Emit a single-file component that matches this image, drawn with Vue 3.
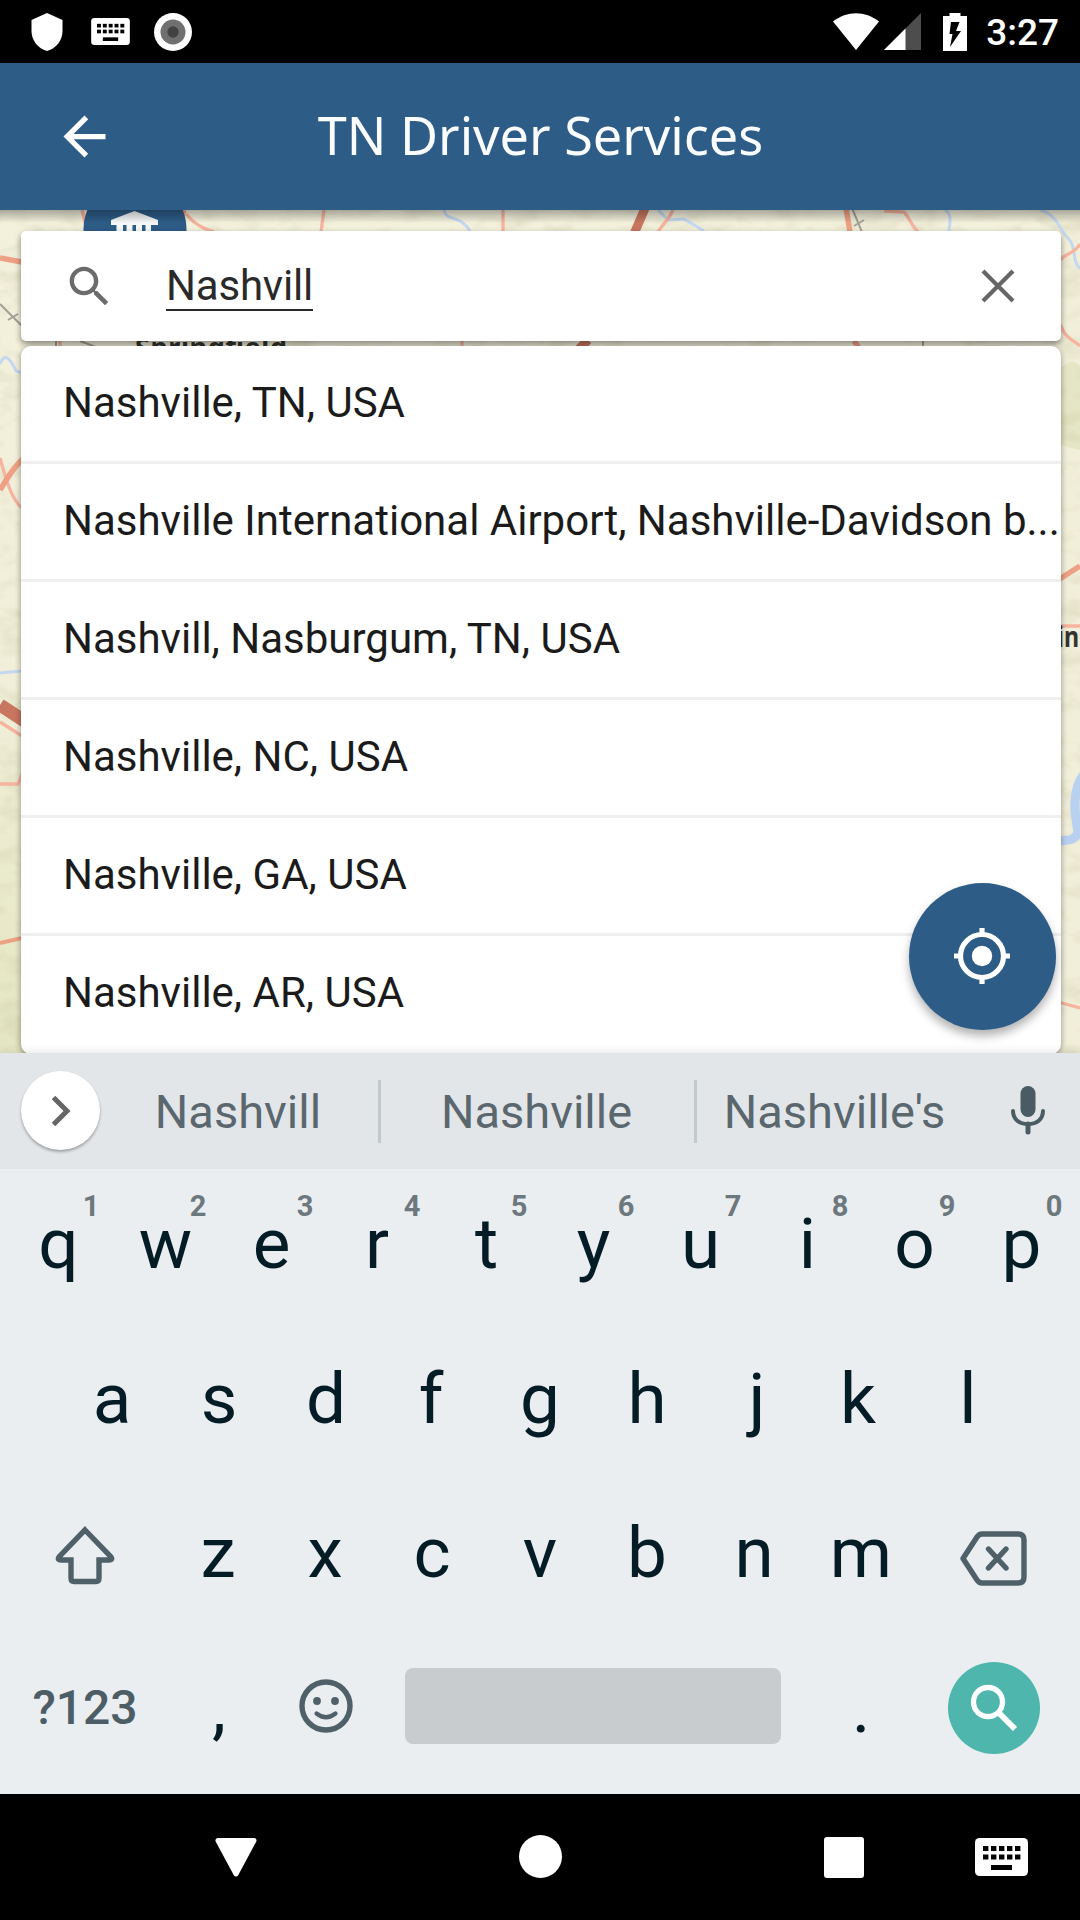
<script setup>
const places = [
  'Nashville, TN, USA',
  'Nashville International Airport, Nashville-Davidson b...',
  'Nashvill, Nasburgum, TN, USA',
  'Nashville, NC, USA',
  'Nashville, GA, USA',
  'Nashville, AR, USA',
]
// optical centring of the asymmetric glyphs, in pixels
const nudge = { r: -2.5, f: -2, j: 3, k: -3, z: -1, x: -1, c: -1, e: -1 }
const shiftOf = (k) => ({ transform: `translateX(${nudge[k] || 0}px)` })
const topRow = 'qwertyuiop'.split('').map((k, i) => ({ k, n: (i + 1) % 10 }))
const midRow = 'asdfghjkl'.split('')
const lowRow = 'zxcvbnm'.split('')
const dots = [0, 1, 2, 3, 4]
</script>

<template>
  <div class="screen">
    <div class="status">
      <svg width="32" height="38" viewBox="0 0 32 38" class="shield"><path d="M16 0 31.500 7V18C31.500 27.500 25 35.500 16 38 7 35.500.5 27.500.5 18V7Z" fill="#fff" /></svg>
      <svg width="39" height="27" viewBox="0 0 53 37" class="kb-small">
        <rect width="53" height="37" rx="4.500" fill="#fff" />
        <g v-for="i in dots" :key="i"><rect :x="8 + i * 8" y="8" width="5.400" height="5" /><rect :x="8 + i * 8" y="16" width="5.400" height="5" /></g>
        <rect x="16" y="26.500" width="21" height="5" />
      </svg>
      <svg width="38" height="38" viewBox="0 0 38 38" class="disc"><circle cx="19" cy="19" r="19" fill="#fff" /><circle cx="19" cy="19" r="12.500" fill="#707070" /><circle cx="19" cy="19" r="5.700" fill="#424242" /></svg>
      <span class="grow"></span>
      <svg width="46" height="37" viewBox="0 0 46 37"><path d="M0 8.500C14-2.500 32-2.500 46 8.500L23 37Z" fill="#fff" /></svg>
      <svg width="37" height="37" viewBox="0 0 37 37" class="signal"><path d="M37 0V37H0Z" fill="#4d4d4d" /><path d="M21.500 15.500V37H0Z" fill="#fff" /></svg>
      <svg width="24" height="38" viewBox="0 0 24 38" class="battery"><path d="M6.500 0H17.500V3H24V38H0V3H6.500Z" fill="#fff" /><path d="M8 9H16.500L13 18H18L7 34 9.500 21H6.500Z" fill="#000" /></svg>
      <span class="clock">3:27</span>
    </div>

    <header class="bar">
      <svg class="back" width="63" height="63" viewBox="0 0 24 24"><path fill="#fff" d="M20 11H7.830l5.590-5.590L12 4l-8 8 8 8 1.410-1.410L7.830 13H20v-2z" /></svg>
      <h1>TN Driver Services</h1>
    </header>

    <main class="map">
      <svg class="terrain" width="1080" height="843" viewBox="0 210 1080 843">
        <defs>
          <filter id="relief" x="0" y="0" width="100%" height="100%">
            <feTurbulence type="fractalNoise" baseFrequency="0.035 0.06" numOctaves="3" seed="8" />
            <feColorMatrix values="0 0 0 0 .5  0 0 0 0 .48  0 0 0 0 .3  1.500 0 0 0 -.68" />
          </filter>
          <linearGradient id="land" x1="0" y1="0" x2="0" y2="1"><stop offset="0" stop-color="#f3f0dc" /><stop offset=".55" stop-color="#f1efd9" /><stop offset="1" stop-color="#e4e6c2" /></linearGradient>
          <linearGradient id="cast" x1="0" y1="0" x2="0" y2="1"><stop offset="0" stop-color="#000" stop-opacity=".3" /><stop offset="1" stop-color="#000" stop-opacity="0" /></linearGradient>
        </defs>
        <rect y="210" width="1080" height="843" fill="url(#land)" />
        <rect x="1040" y="210" width="40" height="843" fill="#f1eed9" />
        <path d="M1040 370C1062 380 1066 352 1080 366V450L1040 440Z" fill="#dfe3bc" opacity=".7" />
        <rect y="210" width="1080" height="843" filter="url(#relief)" opacity=".38" />
        <g fill="none" stroke="#c3d7f0" stroke-width="3">
          <path d="M444 210C446 222 460 214 470 231M658 210 668 220 684 219 704 231M945 210C952 214 950 222 949 232M1041 210C1058 216 1058 228 1068 238 1078 248 1070 262 1082 270" />
          <path d="M0 364C5 350 12 362 16 371L22 373M0 673 22 671" />
        </g>
        <path d="M1086 772C1068 790 1077 825 1078 832 1076 842 1064 840 1056 841" fill="none" stroke="#b9d1f1" stroke-width="9" />
        <g fill="none" stroke="#f6b39d" stroke-width="3.300">
          <path d="M82 210 86 226M186 214C196 226 204 228 214 232M324 210 321 232M503 210V232M673 210C668 222 662 224 658 232M884 211 904 212C910 218 910 224 918 232M1060 260C1068 252 1074 254 1080 244M1060 324C1066 340 1074 340 1080 346" />
          <path d="M0 458C6 480 12 500 22 508M0 722 22 736M0 784H18L22 774M1058 626H1080M1058 1002 1080 1008M60 341V347M462 341V347" />
        </g>
        <g fill="none" stroke="#eda084" stroke-width="5.500">
          <path d="M0 258 22 262M0 490C6 480 14 466 24 458M1058 580 1080 566M846 208 850 232M184 210 180 220M854 341 862 352" />
          <path d="M0 943 22 938" stroke-width="4" />
        </g>
        <g fill="none" stroke="#c87660">
          <path d="M646 206 634 234M588 340 576 352" stroke-width="9" /><path d="M0 705 26 722" stroke-width="13" />
        </g>
        <path d="M0 304 24 328M8 320 18 314M852 208 862 232M854 226 864 220M923 341V347M56 341V347M80 341 96 347" fill="none" stroke="#a3a193" stroke-width="2" />
        <text x="135" y="357" textLength="152" class="label">Springfield</text>
        <text x="1057" y="647" textLength="22" lengthAdjust="spacingAndGlyphs" class="label big">in</text>
        <circle cx="135" cy="229.500" r="51.500" fill="#2d5c87" />
        <path d="M134.500 211 158 220V225H111V220ZM116.500 225H123V232H116.500ZM126.500 225H132.500V232H126.500ZM136 225H142V232H136ZM145.500 225H151V232H145.500Z" fill="#f4f6f8" />
        <rect y="210" width="1080" height="13" fill="url(#cast)" />
      </svg>

      <div class="search">
        <svg class="lens" width="53" height="53" viewBox="0 0 24 24"><path fill="#6b6b6b" d="M15.500 14h-.79l-.28-.27C15.410 12.590 16 11.110 16 9.500 16 5.910 13.090 3 9.500 3S3 5.910 3 9.500 5.910 16 9.500 16c1.610 0 3.090-.59 4.230-1.570l.27.28v.79l5 4.990L20.490 19l-4.990-5zm-6 0C7.010 14 5 11.990 5 9.500S7.010 5 9.500 5 14 7.010 14 9.500 11.990 14 9.500 14z" /></svg>
        <span class="query">Nashvill</span>
        <svg class="clear" width="34" height="34" viewBox="0 0 34 34"><path d="M2 2 32 32M32 2 2 32" stroke="#666" stroke-width="4.200" /></svg>
      </div>

      <ul class="results">
        <li v-for="p in places" :key="p">{{ p }}</li>
      </ul>

      <div class="fab">
        <svg width="58" height="58" viewBox="-29 -29 58 58"><circle r="21.500" fill="none" stroke="#fff" stroke-width="5.200" /><circle r="10.200" fill="#fff" /><path d="M0-28V-21M0 28V21M-28 0H-21M28 0H21" stroke="#fff" stroke-width="5.200" /></svg>
      </div>
    </main>

    <section class="suggest">
      <div class="expand"><svg width="20" height="32" viewBox="0 0 20 32"><path d="M2.500 2.500 16 16 2.500 29.500" fill="none" stroke="#666" stroke-width="5" /></svg></div>
      <span class="word first">Nashvill</span>
      <i></i>
      <span class="word mid">Nashville</span>
      <i></i>
      <span class="word last">Nashville's</span>
      <svg class="mic" width="36" height="50" viewBox="0 0 36 50"><rect x="10.500" y="0" width="15" height="31" rx="7.500" fill="#4b5b63" /><path d="M3 25C3 33.500 9.500 38 18 38S33 33.500 33 25" fill="none" stroke="#4b5b63" stroke-width="4" stroke-linecap="round" /><path d="M18 38V46" stroke="#4b5b63" stroke-width="5" stroke-linecap="round" /></svg>
    </section>

    <section class="keys">
      <div class="row">
        <div v-for="t in topRow" :key="t.k" class="key"><b :style="shiftOf(t.k)">{{ t.k }}</b><sup>{{ t.n }}</sup></div>
      </div>
      <div class="row">
        <div v-for="k in midRow" :key="k" class="key"><b :style="shiftOf(k)">{{ k }}</b></div>
      </div>
      <div class="row">
        <div class="wide"><svg class="shift" width="60" height="59" viewBox="0 0 60 59"><path d="M30 4 56 31Q58 34 54 34H44V52Q44 55.500 41 55.500H19Q16 55.500 16 52V34H6Q2 34 4 31Z" fill="none" stroke="#4f6069" stroke-width="5.400" /></svg></div>
        <div v-for="k in lowRow" :key="k" class="key"><b :style="shiftOf(k)">{{ k }}</b></div>
        <div class="wide"><svg class="del" width="67" height="55" viewBox="0 0 67 55"><path d="M3 27.500 17 6Q19 3 22 3H58Q64 3 64 9V46Q64 52 58 52H22Q19 52 17 49Z" fill="none" stroke="#4f6069" stroke-width="5.400" stroke-linejoin="round" /><path d="M28.500 18 46 37M46 18 28.500 37" stroke="#4f6069" stroke-width="5.400" stroke-linecap="round" /></svg></div>
      </div>
      <div class="row">
        <div class="wide sym">?123</div>
        <div class="key">,</div>
        <div class="key"><svg class="face" width="54" height="54" viewBox="-27 -27 54 54" fill="#4f6069"><circle r="24" fill="none" stroke="#4f6069" stroke-width="5.400" /><circle cx="-9" cy="-5" r="3.900" /><circle cx="9" cy="-5" r="3.900" /><path d="M-9.500 7.500Q0 15 9.500 7.500" fill="none" stroke="#4f6069" stroke-width="4.200" stroke-linecap="round" /></svg></div>
        <div class="space-cell"><div class="space"></div></div>
        <div class="key">.</div>
        <div class="wide"><div class="go"><svg width="48" height="48" viewBox="0 0 48 48" fill="none" stroke="#fff"><circle cx="18" cy="18" r="14.500" stroke-width="5.300" /><path d="M28.500 28.500 45 45" stroke-width="6" /></svg></div></div>
      </div>
    </section>

    <nav class="nav">
      <svg class="tri" width="42" height="39" viewBox="0 0 42 39"><path d="M3 2.500H39L21 36Z" fill="#fff" stroke="#fff" stroke-width="5" stroke-linejoin="round" /></svg>
      <div class="home"></div>
      <div class="recent"></div>
      <svg class="kb" width="53" height="38" viewBox="0 0 53 38">
        <rect width="53" height="38" rx="4.500" fill="#fff" />
        <g v-for="i in dots" :key="i"><rect :x="8 + i * 8" y="8" width="5.400" height="5" /><rect :x="8 + i * 8" y="16.500" width="5.400" height="5" /></g>
        <rect x="16" y="27" width="21" height="5" />
      </svg>
    </nav>
  </div>
</template>

<style>
body { margin: 0; background: #000; }
</style>

<style scoped>
.screen { width: 1080px; height: 1920px; display: flex; flex-direction: column; overflow: hidden; font-family: Roboto, sans-serif; }
svg { display: block; flex: none; }
.status { height: 63px; flex: none; box-sizing: border-box; background: #000; display: flex; align-items: center; padding: 0 21px 0 31px; }
.kb-small { margin-left: 28px; }
.disc { margin-left: 24px; }
.grow { flex: 1; }
.signal { margin-left: 5px; }
.battery { margin-left: 22px; }
.clock { color: #fff; font-size: 37px; font-weight: 500; line-height: 44px; margin: 2px 0 0 19px; }
.bar { height: 147px; flex: none; background: #2d5c87; display: grid; grid-template-columns: 115px 1fr 115px; align-items: center; }
.back { margin-left: 52.500px; }
.bar h1 { margin: 0 0 4px 1px; text-align: center; color: #fafcff; font: 400 52.200px/72px "Noto Sans", "Open Sans", sans-serif; white-space: nowrap; }
.map { position: relative; height: 843px; flex: none; box-sizing: border-box; padding: 21px 19px 0 21px; overflow: hidden; }
.terrain { position: absolute; left: 0; top: 0; }
.label { font: 700 27px "Noto Sans", sans-serif; fill: #33332f; }
.big { font-size: 28px; }
.search { position: relative; height: 110px; display: flex; align-items: center; background: #fff; border-radius: 5px; box-shadow: 0 3px 6px rgba(0, 0, 0, .45); }
.lens { margin-left: 42px; }
.query { margin-left: 50px; font-size: 42px; letter-spacing: -.2px; line-height: 47px; color: #2a2a2a; border-bottom: 2px solid #2a2a2a; }
.clear { margin: 0 46px 0 auto; }
.results { position: relative; list-style: none; margin: 5px 0 0; padding: 0; background: #fff; border-radius: 10px; box-shadow: 0 2px 6px rgba(0, 0, 0, .4); overflow: hidden; }
.results li { height: 118px; line-height: 114px; box-sizing: border-box; padding-left: 42px; border-bottom: 3px solid #efefef; font-size: 42px; color: #1b1b1b; white-space: nowrap; }
.results li:last-child { border-bottom: 0; }
.fab { position: absolute; left: 909px; top: 673px; width: 147px; height: 147px; box-sizing: border-box; padding: 0 1px 1px 0; border-radius: 50%; background: #2d5c87; box-shadow: 0 6px 10px rgba(0, 0, 0, .3); display: flex; align-items: center; justify-content: center; }
.suggest { position: relative; height: 116px; flex: none; background: #e2e6e9; display: flex; align-items: center; color: #5b676e; font-size: 47px; box-shadow: 0 0 10px rgba(0, 0, 0, .12); }
.expand { width: 79px; height: 79px; border-radius: 50%; background: #fff; margin: 0 0 1px 21px; box-shadow: 0 2px 3px rgba(0, 0, 0, .3); display: flex; align-items: center; justify-content: center; }
.word { box-sizing: border-box; text-align: center; padding: 1px 2px 0 0; }
.first { width: 278px; }
.mid { width: 313px; }
.last { width: 277px; }
.suggest i { width: 3px; height: 63px; background: #c3c8cc; }
.mic { margin-left: 36px; }
.keys { position: relative; height: 625px; flex: none; background: #eaeef1; color: #041c26; font-size: 71px; }
.row { height: 154.500px; display: flex; justify-content: center; }
.key { position: relative; width: 107px; line-height: 149.500px; text-align: center; }
.key b { display: block; font-weight: 400; }
.key sup { position: absolute; left: 66px; width: 40px; top: 20px; font-size: 29px; line-height: 34px; font-weight: 700; color: #6d787e; }
.wide { width: 165px; display: flex; justify-content: center; align-items: center; }
.shift { margin-left: 4px; }
.del { margin: 6px 7px 0 0; }
.sym { box-sizing: border-box; padding: 0 0 5px 4px; font-size: 48px; font-weight: 500; color: #4d5d65; }
.face { margin: 46px auto 0; }
.space-cell { box-sizing: border-box; width: 428px; display: flex; justify-content: center; padding: 35px 2px 0 0; }
.space { width: 376px; height: 76px; border-radius: 8px; background: #c8ccce; }
.go { width: 92px; height: 92px; margin: 0 6px 4px 0; border-radius: 50%; background: #4eb6ac; display: flex; align-items: center; justify-content: center; }
.nav { height: 126px; flex: none; background: #000; display: flex; align-items: center; }
.tri { margin-left: 215px; }
.home { width: 43px; height: 43px; border-radius: 50%; background: #fff; margin: 0 0 1px 261.500px; }
.recent { width: 40px; height: 41px; border-radius: 3px; background: #fff; margin-left: 262.500px; }
.kb { margin-left: 111px; }
</style>
